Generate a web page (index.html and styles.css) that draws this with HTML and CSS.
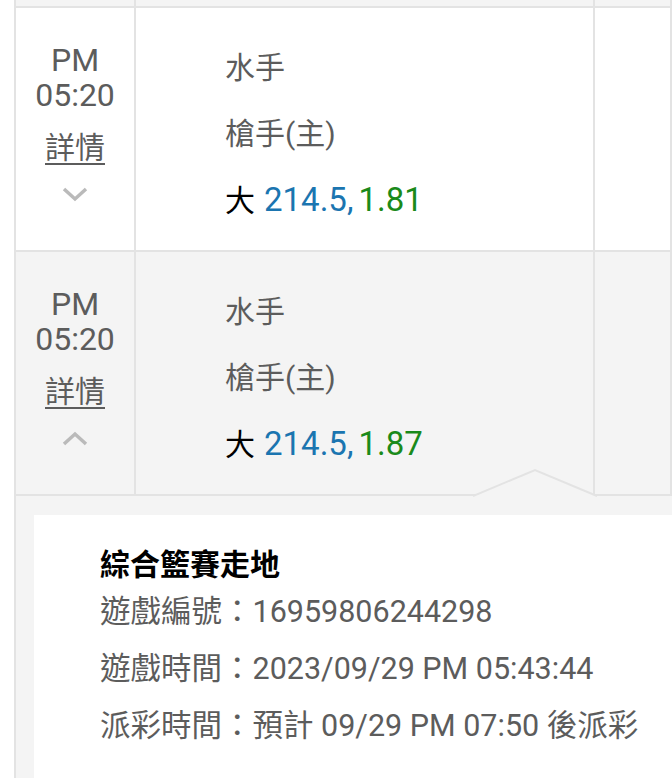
FILE: index.html
```html
<!DOCTYPE html>
<html lang="zh-Hant">
<head>
  <meta charset="UTF-8">
  <title>注單紀錄</title>
  <link rel="stylesheet" href="styles.css">
</head>
<body>

  <div class="record-table">
    <!-- 上一筆（只露出底部） -->
    <div class="cell row-grey row-cut"></div>
    <div class="cell row-grey row-cut"></div>
    <div class="cell row-grey row-cut"></div>

    <!-- 第一筆 -->
    <div class="cell cell-time">
      <div class="time">PM<br>05:20</div>
      <a class="detail-link" href="#">詳情</a>
      <svg class="chevron" width="28" height="17" viewBox="0 0 28 17">
        <polyline points="3,3 14,13 25,3" />
      </svg>
    </div>
    <div class="cell cell-bet">
      <div class="bet-line">水手</div>
      <div class="bet-line">槍手(主)</div>
      <div class="bet-line"><span class="pick">大</span><span class="odds-line">214.5,</span><span class="odds">1.81</span></div>
    </div>
    <div class="cell cell-extra"></div>

    <!-- 第二筆（展開中） -->
    <div class="cell cell-time row-grey">
      <div class="time">PM<br>05:20</div>
      <a class="detail-link" href="#">詳情</a>
      <svg class="chevron" width="28" height="17" viewBox="0 0 28 17">
        <polyline points="3,14 14,4 25,14" />
      </svg>
    </div>
    <div class="cell cell-bet row-grey">
      <div class="bet-line">水手</div>
      <div class="bet-line">槍手(主)</div>
      <div class="bet-line"><span class="pick">大</span><span class="odds-line">214.5,</span><span class="odds">1.87</span></div>
    </div>
    <div class="cell cell-extra row-grey"></div>

    <!-- 展開的詳情 -->
    <div class="detail-row">
      <svg class="notch" width="126" height="29" viewBox="0 0 126 29">
        <polyline points="0,28 62,2 124,28" />
      </svg>
      <div class="detail-card">
        <div class="detail-title">綜合籃賽走地</div>
        <div class="detail-line">遊戲編號：16959806244298</div>
        <div class="detail-line">遊戲時間：2023/09/29 PM 05:43:44</div>
        <div class="detail-line">派彩時間：預計 09/29 PM 07:50 後派彩</div>
      </div>
    </div>
  </div>

</body>
</html>
```

FILE: styles.css
```css
body {
  margin: 0;
  background: #fff;
  font-family: Roboto, "Noto Sans CJK TC", sans-serif;
  color: #5c5c5c;
  overflow: hidden;
}

.record-table {
  margin-left: 14px;
  border-left: 2px solid #e3e3e3;
  display: grid;
  grid-template-columns: 120px 459px 1fr;
}

.cell {
  box-sizing: border-box;
  height: 244px;
  border-right: 2px solid #e3e3e3;
  border-bottom: 2px solid #e3e3e3;
  background: #fff;
}

.row-grey {
  background: #f4f4f4;
}

.cell.row-cut {
  height: 8px;
  padding: 0;
}

.cell-time {
  display: flex;
  flex-direction: column;
  align-items: center;
  padding-top: 35px;
}

.time {
  font-size: 32px;
  line-height: 35px;
  text-align: center;
}

.detail-link {
  margin-top: 15px;
  font-size: 30px;
  line-height: 40px;
  color: #5c5c5c;
  text-decoration: underline;
  text-decoration-thickness: 2px;
  text-underline-offset: 5px;
}

.chevron {
  margin-top: 18px;
  fill: none;
  stroke: #bababa;
  stroke-width: 3.5;
}

.cell-bet {
  padding: 27px 0 0 89px;
}

.bet-line {
  font-size: 30px;
  line-height: 66px;
  white-space: nowrap;
}

.pick {
  color: #000;
  margin-right: 9px;
}

.odds-line {
  font-size: 33px;
  color: #1b75b0;
}

.odds {
  font-size: 33px;
  margin-left: 5px;
  color: #1a8a1a;
}

.detail-row {
  grid-column: 1 / -1;
  position: relative;
  background: #f4f4f4;
  padding: 19px 0 0 18px;
}

.notch {
  position: absolute;
  left: 457px;
  top: -28px;
  fill: #f4f4f4;
  stroke: #e3e3e3;
  stroke-width: 2;
}

.detail-card {
  background: #fff;
  padding: 32px 0 60px 66px;
}

.detail-title {
  font-size: 30px;
  line-height: 36px;
  font-weight: bold;
  color: #000;
}

.detail-line {
  font-size: 30.5px;
  line-height: 57px;
  white-space: nowrap;
}
```
